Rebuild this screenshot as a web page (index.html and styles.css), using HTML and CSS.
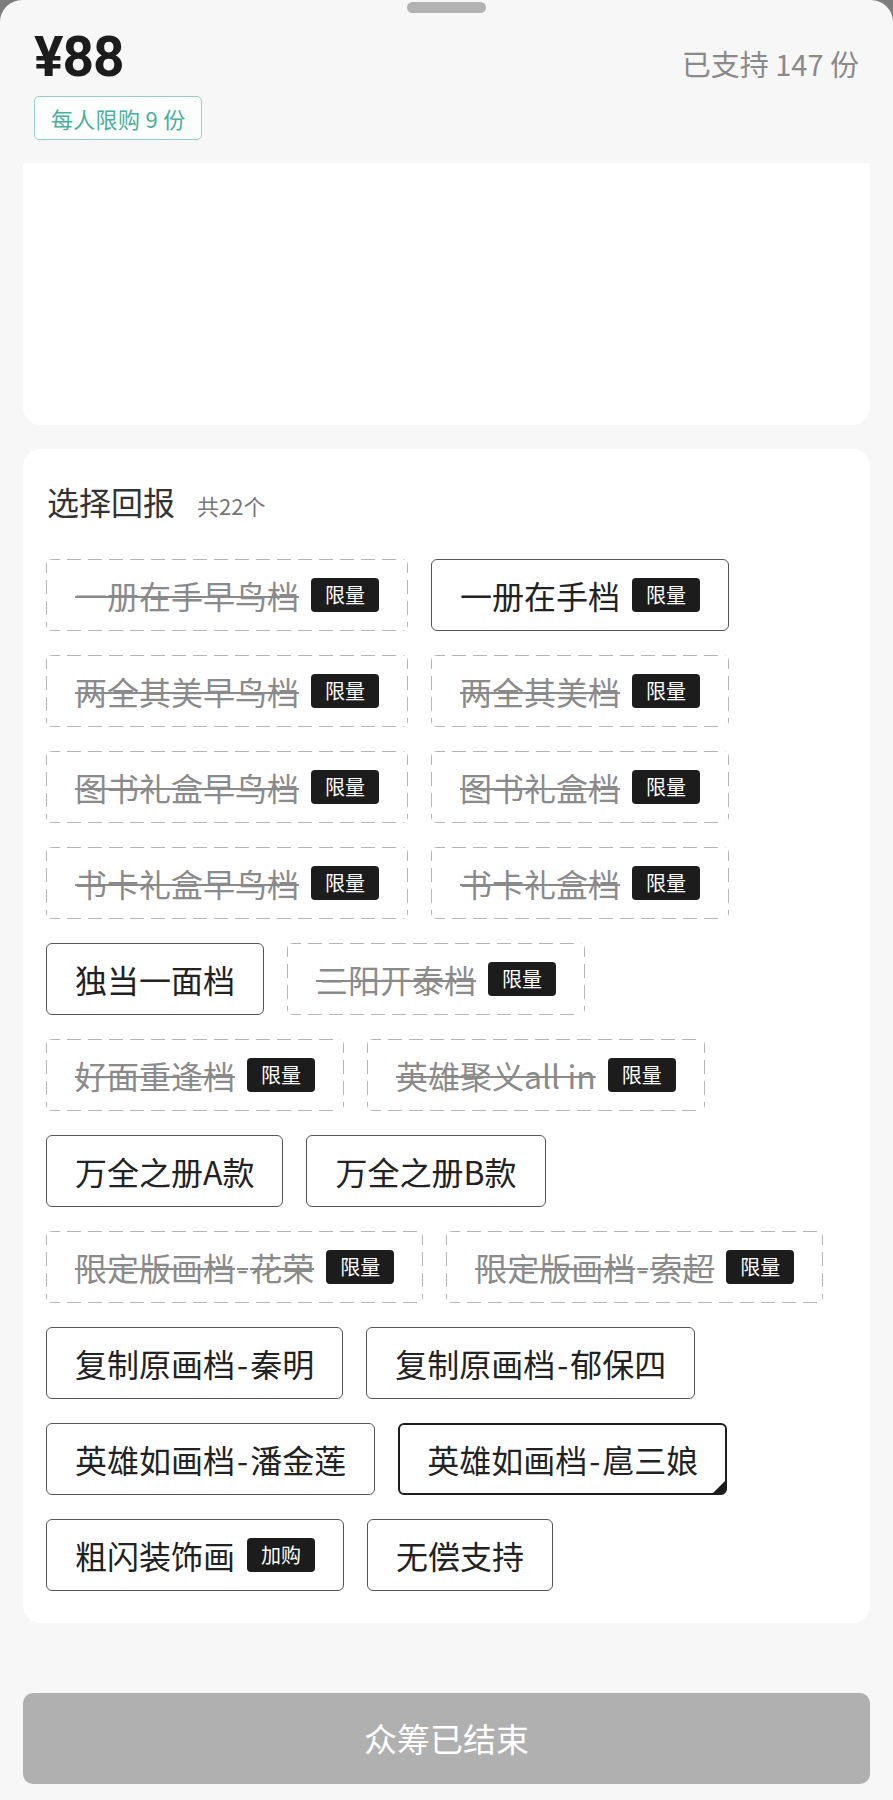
FILE: index.html
```html
<!DOCTYPE html>
<html lang="zh-CN">
<head>
<meta charset="utf-8">
<title>选择回报</title>
<link rel="stylesheet" href="styles.css">
</head>
<body>
<div class="sheet">
  <div class="handle"></div>
  <div class="head">
    <div class="price">¥88</div>
    <div class="supported">已支持 147 份</div>
  </div>
  <div class="limit">每人限购 9 份</div>
  <div class="card blank"></div>
  <div class="card rewards">
    <div class="title"><span class="t-main">选择回报</span><span class="t-count">共22个</span></div>
    <div class="opts">
      <div class="opt off"><span class="name">一册在手早鸟档</span><span class="badge">限量</span></div>
      <div class="opt"><span class="name">一册在手档</span><span class="badge">限量</span></div>
      <div class="opt off"><span class="name">两全其美早鸟档</span><span class="badge">限量</span></div>
      <div class="opt off"><span class="name">两全其美档</span><span class="badge">限量</span></div>
      <div class="opt off"><span class="name">图书礼盒早鸟档</span><span class="badge">限量</span></div>
      <div class="opt off"><span class="name">图书礼盒档</span><span class="badge">限量</span></div>
      <div class="opt off"><span class="name">书卡礼盒早鸟档</span><span class="badge">限量</span></div>
      <div class="opt off"><span class="name">书卡礼盒档</span><span class="badge">限量</span></div>
      <div class="opt"><span class="name">独当一面档</span></div>
      <div class="opt off"><span class="name">三阳开泰档</span><span class="badge">限量</span></div>
      <div class="opt off"><span class="name">好面重逢档</span><span class="badge">限量</span></div>
      <div class="opt off"><span class="name">英雄聚义all in</span><span class="badge">限量</span></div>
      <div class="opt"><span class="name">万全之册A款</span></div>
      <div class="opt"><span class="name">万全之册B款</span></div>
      <div class="opt off"><span class="name">限定版画档<span class="dash">-</span>花荣</span><span class="badge">限量</span></div>
      <div class="opt off"><span class="name">限定版画档<span class="dash">-</span>索超</span><span class="badge">限量</span></div>
      <div class="opt"><span class="name">复制原画档<span class="dash">-</span>秦明</span></div>
      <div class="opt"><span class="name">复制原画档<span class="dash">-</span>郁保四</span></div>
      <div class="opt"><span class="name">英雄如画档<span class="dash">-</span>潘金莲</span></div>
      <div class="opt sel"><span class="name">英雄如画档<span class="dash">-</span>扈三娘</span></div>
      <div class="opt"><span class="name">粗闪装饰画</span><span class="badge">加购</span></div>
      <div class="opt"><span class="name">无偿支持</span></div>
    </div>
  </div>
  <div class="cta">众筹已结束</div>
</div>
</body>
</html>
```
FILE: styles.css
```css
html, body {
  margin: 0;
  padding: 0;
  background: #7c7c7c;
}
body {
  font-family: "Noto Sans CJK SC", "Noto Sans", sans-serif;
  color: #222;
}
.sheet {
  background: #f7f7f7;
  border-radius: 22px 22px 0 0;
  min-height: 1800px;
  padding: 0 23px;
  box-sizing: border-box;
  display: flex;
  flex-direction: column;
  overflow: hidden;
}
.handle {
  align-self: center;
  width: 79px;
  height: 11px;
  margin-top: 2px;
  border-radius: 6px;
  background: #b3b3b3;
}
.head {
  display: flex;
  justify-content: space-between;
  align-items: baseline;
  margin-top: 8px;
  padding: 0 11px;
  height: 72px;
}
.price {
  font-family: Roboto, "Noto Sans", sans-serif;
  font-weight: 700;
  font-size: 55px;
  line-height: 72px;
  color: #1c1c1c;
  letter-spacing: -1px;
}
.supported {
  font-size: 29px;
  line-height: 72px;
  color: #8a8a8a;
}
.limit {
  align-self: flex-start;
  margin: 3px 0 0 11px;
  height: 44px;
  box-sizing: border-box;
  padding: 0 16px;
  border: 1px solid #92d2c6;
  border-radius: 5px;
  background: #fbfefd;
  color: #4aae9c;
  font-size: 22px;
  line-height: 42px;
  letter-spacing: 0.3px;
}
.card {
  background: #fff;
}
.blank {
  margin-top: 23px;
  height: 262px;
  border-radius: 2px 2px 18px 18px;
}
.rewards {
  margin-top: 24px;
  border-radius: 18px;
  padding: 32px 23px 32px;
}
.title {
  display: flex;
  align-items: baseline;
  height: 40px;
  padding-left: 1px;
}
.t-main {
  font-size: 32px;
  line-height: 40px;
  color: #333;
}
.t-count {
  margin-left: 22px;
  font-size: 22px;
  color: #777;
}
.opts {
  margin-top: 38px;
  display: flex;
  flex-wrap: wrap;
  gap: 24px 23px;
}
.opt {
  position: relative;
  height: 72px;
  box-sizing: border-box;
  display: flex;
  align-items: center;
  padding: 0 28px;
  border: 1px solid #555;
  border-radius: 6px;
  font-size: 32px;
  color: #222;
  white-space: nowrap;
}
.dash {
  margin: 0 2px;
}
.opt.off {
  border: 1px solid transparent;
  background:
    repeating-linear-gradient(90deg, #b5b5b5 0 14px, transparent 14px 21px) top left / 100% 1px no-repeat,
    repeating-linear-gradient(90deg, #b5b5b5 0 14px, transparent 14px 21px) bottom left / 100% 1px no-repeat,
    repeating-linear-gradient(180deg, #b5b5b5 0 14px, transparent 14px 21px) top left / 1px 100% no-repeat,
    repeating-linear-gradient(180deg, #b5b5b5 0 14px, transparent 14px 21px) top right / 1px 100% no-repeat;
  background-origin: border-box;
  color: #8a8a8a;
}
.opt.off .name {
  text-decoration: line-through;
  text-decoration-color: #8a8a8a;
  text-decoration-thickness: 2px;
}
.opt.sel {
  border: 2px solid #1c1c1c;
  padding: 0 27px;
}
.opt.sel::after {
  content: "";
  position: absolute;
  right: 0;
  bottom: 0;
  width: 0;
  height: 0;
  border-style: solid;
  border-width: 0 0 12px 12px;
  border-color: transparent transparent #1c1c1c transparent;
  border-bottom-right-radius: 3px;
}
.badge {
  margin-left: 12px;
  height: 34px;
  padding: 0 14px;
  border-radius: 4px;
  background: #1c1c1c;
  color: #fff;
  font-size: 20px;
  line-height: 34px;
  text-decoration: none;
}
.cta {
  margin-top: 70px;
  height: 91px;
  border-radius: 10px;
  background: #b0b0b0;
  color: #fff;
  font-size: 33px;
  line-height: 91px;
  text-align: center;
}
```
